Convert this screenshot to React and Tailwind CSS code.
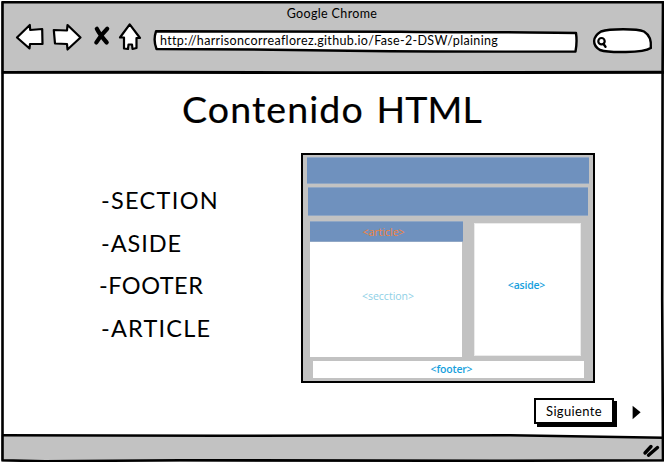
const items = [
  { label: '-SECTION', style: 'pl-[2px] tracking-[1.3px]' },
  { label: '-ASIDE', style: 'pl-[2px] tracking-[0.95px]' },
  { label: '-FOOTER', style: 'tracking-[0.5px]' },
  { label: '-ARTICLE', style: 'pl-[2px] tracking-[1.2px]' },
];

function NavIcons() {
  return (
    <svg className="ml-[14px] mt-[22px] h-[30px] w-[127px] shrink-0" viewBox="15 22 127 30" fill="white" stroke="black" strokeWidth="2.2" strokeLinejoin="round" strokeLinecap="round">
      <path d="M17 37.5 29.8 25 30.2 30 42.2 29 42.5 44 30 44 29.5 48.5Z" />
      <path d="M53.8 30 67 30.5 67.5 25 80.5 37.5 67.5 49.5 67 44 55 43.5Z" />
      <path d="M96.8 28.8 Q100 35 106.7 42.5 M107.2 28.8 Q101 35 96.3 42.5" fill="none" strokeWidth="4.2" />
      <path d="M129.7 24.3 120 37.5 124 37.5 124 48.5 128 49 128.5 44.5 132 44.5 132.5 49 136.5 48 136.5 38 140 38Z" />
    </svg>
  );
}

function AddressBar() {
  return (
    <div className="relative ml-[11px] mt-[29px] h-[25px] w-[426px] shrink-0">
      <svg className="absolute inset-0" width="426" height="25" viewBox="153 29 426 25" fill="white" stroke="black" strokeWidth="2.4" strokeLinejoin="round">
        <path d="M156 31.3 C250 31 330 31 400 31.7 S530 32 576 33 Q577.3 42 575.5 51.5 Q430 52 330 50.5 T156.5 49 Q153 40 156 31.3Z" />
      </svg>
      <span className="relative ml-[7px] block whitespace-nowrap text-[12.5px] leading-[24px] tracking-[0.34px]">
        http://harrisoncorreaflorez.github.io/Fase-2-DSW/plaining
      </span>
    </div>
  );
}

function SearchBox() {
  return (
    <svg className="ml-[13px] mt-[27px] h-[28px] w-[62px] shrink-0" viewBox="592 27 62 28" fill="white" stroke="black" strokeWidth="2.4" strokeLinecap="round">
      <path d="M601 31.5 C610 28.5 637 28.5 644 31.5 Q652 36.5 650.8 48 C643 53 609 53 600 50 C592 45 592 37 601 31.5Z" />
      <circle cx="601.5" cy="41.2" r="3.2" strokeWidth="2.2" />
      <path d="m603.5 44 2 2.7" fill="none" />
    </svg>
  );
}

function PageDiagram() {
  return (
    <div className="h-[230px] w-[294px] shrink-0 border-2 border-black bg-[#c2c2c2] pl-px pt-[2px] font-['Open_Sans','Noto_Sans',sans-serif] text-[10.5px]">
      <div className="ml-[3px] h-[27px] w-[282px] border-y border-[#90a7c5] bg-[#6f91be]" />
      <div className="ml-[4px] mt-[3px] h-[29px] w-[280px] border-y border-[#90a7c5] bg-[#6f91be]" />
      <div className="ml-[6px] mt-[5px] flex h-[136px] items-start">
        <div className="w-[153px]">
          <div className="flex h-[21px] items-center justify-center border-y border-[#90a7c5] bg-[#6f91be] pr-[6px] pt-[2px] text-[#f58238]">
            &lt;article&gt;
          </div>
          <div className="flex h-[115px] w-[152px] items-center justify-center bg-white text-[#8ed0e6]">
            <span className="-mt-[6px] ml-[4px]">&lt;secction&gt;</span>
          </div>
        </div>
        <div className="ml-[11px] mt-[2px] flex h-[133px] w-[107px] items-center justify-center border border-[#ebebeb] bg-white pb-[8px] pr-[2px] font-semibold tracking-[-0.2px] text-[#169fdd]">
          &lt;aside&gt;
        </div>
      </div>
      <div className="ml-[9px] mt-[4px] flex h-[17px] w-[271px] items-center justify-center bg-white font-semibold tracking-[-0.2px] text-[#169fdd]">
        <span className="ml-[6px]">&lt;footer&gt;</span>
      </div>
    </div>
  );
}

export default function App() {
  return (
    <div className="flex h-[463px] w-[665px] flex-col overflow-hidden bg-white p-px font-['Lato','Open_Sans',sans-serif] text-black">
      <div className="relative flex h-[461px] w-[663px] flex-col overflow-hidden">
        <header className="relative flex h-[73px] shrink-0 items-start bg-[#c2c2c2]">
          <h2 className="absolute left-0 top-[5px] w-[662px] text-center text-[12.5px] leading-[15px] tracking-[0.35px]">Google Chrome</h2>
          <div className="-mt-px flex items-start">
            <NavIcons />
            <AddressBar />
            <SearchBox />
          </div>
        </header>
        <main className="flex h-[361px] shrink-0 flex-col">
          <h1 className="mt-[12px] h-[46px] whitespace-nowrap pl-[181px] text-[37.5px] leading-[46px] tracking-[1.1px] [-webkit-text-stroke:0.2px_black]">
            Contenido <span className="ml-[2px] tracking-[0.1px]">HTML</span>
          </h1>
          <div className="mt-[21px] flex items-start">
            <ul className="ml-[98px] mt-[32px] w-[202px] shrink-0 text-[23.5px] leading-[30px]">
              {items.map((item) => (
                <li key={item.label} className="mb-[12.7px]">
                  <span className={item.style}>{item.label}</span>
                </li>
              ))}
            </ul>
            <PageDiagram />
          </div>
          <div className="mt-[15px] flex items-center pl-[533px]">
            <button className="h-[26px] w-[80px] border-2 border-black bg-white text-[13px] leading-[22px] tracking-[0.35px] shadow-[3px_3px_0_black]">Siguiente</button>
            <svg className="ml-[18px] mt-[2px]" width="9" height="15" viewBox="0 0 9 15">
              <path d="M.6 .7 8.6 7.2 .6 14.2Z" />
            </svg>
          </div>
        </main>
        <footer className="h-[27px] shrink-0">
          <svg width="663" height="27" viewBox="1 435 663 27">
            <path d="M1 435 H220 L540 435.7 664 437.5V462H1Z" fill="#c2c2c2" />
            <path d="m645 453 6-6.5 M648.5 455.2 657.5 447.5" fill="none" stroke="black" strokeWidth="3.4" strokeLinecap="round" />
          </svg>
        </footer>
        <svg className="pointer-events-none absolute inset-0" width="663" height="461" viewBox="1 1 663 461" fill="none" stroke="black" strokeWidth="2.6" strokeLinejoin="round">
          <path d="M2.5 2.2 H663 L662.6 72 662.2 300 663 460.3 490 460.8 180 460.2 45 461.2 2.5 460.3Z" />
          <path d="M2 72.4 150 72.2 320 72.6 664 72.3" strokeWidth="2.9" />
          <path d="M2 435.3 220 435.8 510 435.3 664 437.8" />
        </svg>
      </div>
    </div>
  );
}
